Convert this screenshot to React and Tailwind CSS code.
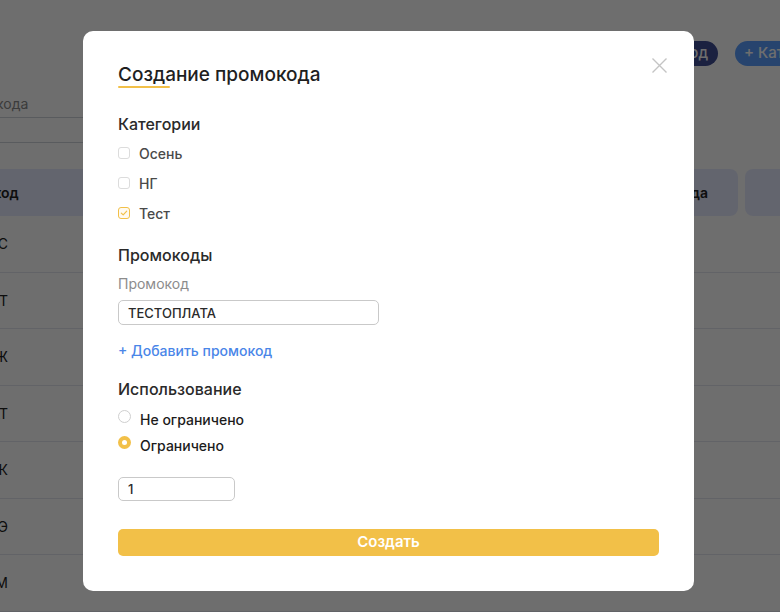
import React, { useState } from "react";

const font = { fontFamily: "Inter, 'Noto Sans', sans-serif" };

const rows = ["ОСЕНЬС", "ТЕСТТ", "ЁЖ", "ЗИМАТ", "ПОК", "ЭЭ", "ДОМ"];

const Page = () => (
  <div className="-ml-[60px] w-[920px]">
    {/* top buttons */}
    <div className="flex justify-end gap-[17px] pr-[5px] pt-[41px]">
      <div className="flex h-[25px] items-center rounded-full bg-[#3f4d95] px-[10px] text-[15px] font-medium text-white">
        + Промокод
      </div>
      <div className="flex h-[25px] w-[120px] items-center rounded-full bg-[#5c9fff] px-[9px] text-[15px] font-medium text-white">
        + Категория
      </div>
    </div>

    {/* search */}
    <div className="-ml-[39px] mt-[24px] flex h-[28px] w-[460px] items-center border-b border-[#cfd2da] pl-[4px] text-[14px] text-[#8a8a8a]">
      Поиск промокода
    </div>
    <div className="mt-[24px] h-px w-[420px] bg-[#cfd2da]" />

    {/* table header */}
    <div className="mt-[26px] flex h-[47px] gap-[7px] text-[14px] font-semibold text-[#222]">
      <div className="flex w-[360px] items-center rounded-l-[8px] bg-[#e6ebff] pl-[6px]">
        Промокод
      </div>
      <div className="flex flex-1 items-center justify-end rounded-[8px] bg-[#e6ebff] pr-[30px]">
        Тип промокода
      </div>
      <div className="w-[115px] rounded-l-[8px] bg-[#e6ebff]" />
    </div>

    {/* rows */}
    {rows.map((r, i) => (
      <div
        key={i}
        className="flex h-[56.5px] items-center border-b border-[#e3e6ef] text-[14px] text-[#222]"
      >
        <div className="w-[68px] text-right">{r}</div>
      </div>
    ))}
  </div>
);

const Checkbox = ({ checked, label }) => (
  <div className="flex h-[30px] items-center gap-[9px]">
    <div
      className={
        checked
          ? "flex h-[12px] w-[12px] items-center justify-center rounded-[3px] border border-[#f2c048] bg-[#fffaf0]"
          : "h-[12px] w-[12px] rounded-[3px] border border-[#dcdcdc] bg-white"
      }
    >
      {checked && (
        <svg width="8" height="8" viewBox="0 0 8 8">
          <path d="M1.3 4.1 3.2 5.9 6.7 2.2" fill="none" stroke="#f2c048" strokeWidth="1.2" strokeLinecap="round" strokeLinejoin="round" />
        </svg>
      )}
    </div>
    <span className="text-[14px] font-medium text-[#4a4a4a]">{label}</span>
  </div>
);

const Radio = ({ checked, label }) => (
  <div className="flex h-[26px] items-center gap-[9px]">
    <div
      className={
        checked
          ? "-mt-[5px] flex h-[13px] w-[13px] items-center justify-center rounded-full bg-[#f2c048]"
          : "-mt-[5px] h-[13px] w-[13px] rounded-full border border-[#cfcfcf] bg-white"
      }
    >
      {checked && <div className="h-[5px] w-[5px] rounded-full bg-white" />}
    </div>
    <span className="text-[14px] font-medium text-[#1c1c1c]">{label}</span>
  </div>
);

export default function App() {
  const [code, setCode] = useState("ТЕСТОПЛАТА");
  const [count, setCount] = useState("1");

  return (
    <div className="relative h-[612px] w-[780px] overflow-hidden bg-white" style={font}>
      <Page />

      {/* overlay */}
      <div className="absolute inset-0 bg-black/[0.57] pl-[83px] pt-[31px]">
        <div className="relative h-[560px] w-[611px] rounded-[10px] bg-white pl-[35px] pt-[32px]">
          <button className="absolute right-[27px] top-[27px] h-[15px] w-[15px]">
            <svg width="15" height="15" viewBox="0 0 15 15">
              <path d="M0.5 0.5 14.5 14.5M14.5 0.5 0.5 14.5" stroke="#c4c4c4" strokeWidth="1.4" />
            </svg>
          </button>

          <div className="h-[24px] text-[19px] font-medium leading-[24px] text-[#1f1f1f]">
            Создание промокода
          </div>
          <div className="-mt-[1px] h-[2px] w-[52px] rounded-full bg-[#f2c048]" />

          <div className="mt-[26px] text-[16px] font-medium leading-[20px] text-[#2a2a2a]">
            Категории
          </div>
          <div className="mt-[4px]">
            <Checkbox label="Осень" />
            <Checkbox label="НГ" />
            <Checkbox label="Тест" checked />
          </div>

          <div className="mt-[17px] text-[16px] font-medium leading-[20px] text-[#2a2a2a]">
            Промокоды
          </div>
          <div className="mt-[9px] text-[14px] leading-[20px] text-[#8c8c8c]">Промокод</div>
          <input
            value={code}
            onChange={(e) => setCode(e.target.value)}
            className="mt-[6px] block h-[25px] w-[261px] rounded-[5px] border border-[#c9c9c9] px-[9px] text-[13px] font-medium text-[#2a2a2a] outline-none"
          />
          <div className="mt-[16px] text-[14px] font-medium leading-[20px] text-[#4a86e8]">
            + Добавить промокод
          </div>

          <div className="mt-[18px] text-[16px] font-medium leading-[20px] text-[#2a2a2a]">
            Использование
          </div>
          <div className="mt-[7px]">
            <Radio label="Не ограничено" />
            <Radio label="Ограничено" checked />
          </div>
          <input
            value={count}
            onChange={(e) => setCount(e.target.value)}
            className="mt-[19px] block h-[24px] w-[117px] rounded-[5px] border border-[#c9c9c9] px-[9px] text-[13px] font-medium text-[#2a2a2a] outline-none"
          />

          <button className="mt-[28px] flex h-[27px] w-[541px] items-center justify-center rounded-[5px] bg-[#f2c048] text-[15px] font-semibold text-white">
            Создать
          </button>
        </div>
      </div>
    </div>
  );
}
